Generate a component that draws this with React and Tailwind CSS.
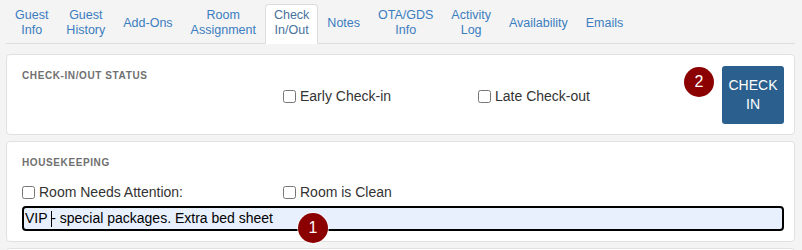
import React from 'react';

const tabs = [
  ['Guest', 'Info'],
  ['Guest', 'History'],
  ['Add-Ons'],
  ['Room', 'Assignment'],
  ['Check', 'In/Out'],
  ['Notes'],
  ['OTA/GDS', 'Info'],
  ['Activity', 'Log'],
  ['Availability'],
  ['Emails'],
];

function Badge({ n, className }) {
  return (
    <div
      className={
        'absolute w-[30px] h-[30px] rounded-full bg-[#8b0000] text-white text-[16px] leading-none flex items-center justify-center ring-1 ring-white/60 ' +
        className
      }
    >
      {n}
    </div>
  );
}

function Check({ label }) {
  return (
    <label className="flex items-center gap-[4px] text-[14px] text-[#333]">
      <input type="checkbox" className="m-0 w-[13px] h-[13px]" />
      <span>{label}</span>
    </label>
  );
}

export default function App() {
  return (
    <div
      className="w-[802px] h-[250px] overflow-hidden bg-[#f4f4f4] pl-[6px] pr-[7px]"
      style={{ fontFamily: '"Liberation Sans", Arial, sans-serif' }}
    >
      <div className="mt-[4px] flex border-b border-[#dcdcdc]">
        {tabs.map((t, i) => {
          const active = i === 4;
          return (
            <div
              key={i}
              className={
                'flex flex-col items-center justify-center text-center px-2 pt-[3px] pb-[5px] -mb-px border rounded-t-[4px] text-[12.5px] leading-[15px] ' +
                (active
                  ? 'bg-white border-[#dcdcdc] border-b-white text-[#47719c]'
                  : 'border-transparent text-[#3b7dc0]')
              }
            >
              {t.map((l) => (
                <span key={l}>{l}</span>
              ))}
            </div>
          );
        })}
      </div>

      <div className="relative mt-[10px] bg-white border border-[#e1e1e1] rounded-[4px] pl-[15px] pr-[10px] pt-[11px] pb-[10px] flex">
        <div className="flex-1">
          <div className="mt-[4px] text-[10px] leading-[12px] font-bold tracking-[0.6px] text-[#707070]">
            CHECK-IN/OUT STATUS
          </div>
          <div className="mt-[4px] h-[20px] flex items-center">
            <div className="w-[261px]" />
            <div className="w-[195px]">
              <Check label="Early Check-in" />
            </div>
            <Check label="Late Check-out" />
          </div>
        </div>
        <button className="w-[62px] h-[58px] rounded-[3px] bg-[#2b5f8e] text-white text-[14px] leading-[19.5px] flex flex-col items-center justify-center">
          <span>CHECK</span>
          <span>IN</span>
        </button>
        <Badge n="2" className="left-[677px] top-[12px]" />
      </div>

      <div className="relative mt-[6px] bg-white border border-[#e1e1e1] rounded-[4px] pl-[15px] pr-[10px] pt-[11px] pb-[10px]">
        <div className="mt-[4px] text-[10px] leading-[12px] font-bold tracking-[0.6px] text-[#707070]">
          HOUSEKEEPING
        </div>
        <div className="mt-[13px] h-[20px] flex items-center">
          <div className="w-[261px]">
            <Check label="Room Needs Attention:" />
          </div>
          <Check label="Room is Clean" />
        </div>
        <div className="mt-[4px] h-[25px] flex items-center border-2 border-black rounded-[4px] bg-[#e8f0fe] pl-px text-[14px] text-black whitespace-pre">
          <span>VIP </span>
          <span className="inline-block w-px h-[16px] bg-black -mr-px" />
          <span>- special packages. Extra bed sheet</span>
        </div>
        <Badge n="1" className="left-[291px] top-[71px]" />
      </div>

      <div className="mt-[6px] h-[40px] bg-white border border-[#e1e1e1] rounded-[4px]" />
    </div>
  );
}
